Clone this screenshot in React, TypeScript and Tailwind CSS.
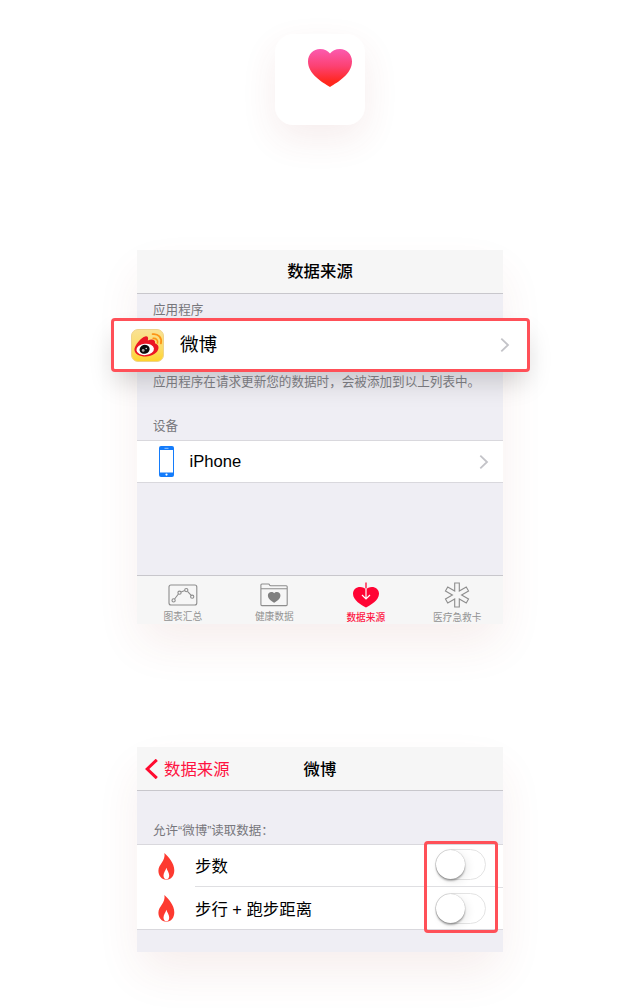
import type { ReactNode } from "react";

const heartPath =
  "M22 38 C14 33 0 25 0 12.5 C0 5 5.5 0 12 0 C16.5 0 20 2 22 4.5 C24 2 27.5 0 32 0 C38.5 0 44 5 44 12.5 C44 25 30 33 22 38 Z";

function HealthIcon() {
  return (
    <div className="h-[91px] w-[90px] rounded-[18px] bg-white pl-[33px] pt-[15px] shadow-[0_14px_36px_rgba(150,60,50,0.09)]">
      <svg className="block" width="44" height="38" viewBox="0 0 44 38">
        <defs>
          <linearGradient id="heart" x1="0" y1="0" x2="0" y2="1">
            <stop offset="0" stopColor="#fb5bb0" />
            <stop offset="0.45" stopColor="#fc4173" />
            <stop offset="0.85" stopColor="#ff2820" />
            <stop offset="1" stopColor="#ff281c" />
          </linearGradient>
        </defs>
        <path d={heartPath} fill="url(#heart)" />
      </svg>
    </div>
  );
}

function WeiboIcon() {
  return (
    <svg className="block shrink-0" width="33" height="33" viewBox="0 0 33 33">
      <defs>
        <linearGradient id="gold" x1="0" y1="0" x2="0" y2="1">
          <stop offset="0" stopColor="#f9e295" />
          <stop offset="0.6" stopColor="#fcdc66" />
          <stop offset="1" stopColor="#ffd32b" />
        </linearGradient>
      </defs>
      <rect x="0.5" y="0.5" width="32" height="32" rx="6.5" fill="url(#gold)" stroke="#efd38a" />
      <path
        d="M3.4 20.6 C3.4 16.2 10.4 8.2 14.3 7.4 C16.9 6.9 17.7 8.9 16.8 11.4 C20.2 9.8 24.8 9.9 24 14.3 C26.2 15.1 27.7 16.6 27.5 19.1 C27 24 21 27.6 14.7 27.6 C8.6 27.6 3.4 25.2 3.4 20.6 Z"
        fill="#eb1624"
      />
      <ellipse cx="14.2" cy="20.4" rx="8.8" ry="5.7" fill="#fff" transform="rotate(-6 14.2 20.4)" />
      <ellipse cx="13.6" cy="20.3" rx="5.1" ry="4.5" fill="#0b0b0b" transform="rotate(-18 13.6 20.3)" />
      <circle cx="12.2" cy="21.4" r="1.4" fill="#aaa" />
      <circle cx="15.2" cy="19.5" r="0.7" fill="#fff" />
      <path d="M22.2 9.4 C25 9 27.2 11.4 26.5 14" fill="none" stroke="#fc9415" strokeWidth="1.6" strokeLinecap="round" />
      <path d="M21.6 5.2 C27.2 4.4 31.3 9 29.9 14.4" fill="none" stroke="#fc9415" strokeWidth="1.8" strokeLinecap="round" />
    </svg>
  );
}

function Chevron() {
  return (
    <svg className="block" width="10" height="16" viewBox="0 0 10 16" fill="none" stroke="#c3c3c8" strokeWidth="1.8">
      <path d="M1.3 1.7 L8 8 L1.3 14.3" />
    </svg>
  );
}

function PhoneIcon() {
  return (
    <svg className="block" width="15" height="31" viewBox="0 0 15 31">
      <rect width="15" height="31" rx="2" fill="#147cfb" />
      <rect x="1" y="4" width="13" height="22.5" fill="#fff" />
      <path d="M5.5 2.3 H9.5" stroke="#a9d0ff" strokeWidth="0.9" />
      <circle cx="7.5" cy="28.6" r="1.1" fill="#fff" />
    </svg>
  );
}

function ChartIcon() {
  return (
    <svg width="30" height="24" viewBox="0 0 30 24" fill="none" stroke="#8d8d8d" strokeWidth="1.1">
      <rect x="1" y="2" width="27.8" height="20" rx="2" />
      <path d="M6.6 16 L10.4 11 M13.1 8.9 L16.8 7.6 M19.5 8.3 L23.2 12.3" />
      <circle cx="5.6" cy="17.4" r="1.6" />
      <circle cx="11.5" cy="9.7" r="1.6" />
      <circle cx="18.3" cy="7.1" r="1.6" />
      <circle cx="24.2" cy="13.7" r="1.6" />
    </svg>
  );
}

function FolderIcon() {
  return (
    <svg width="28" height="24" viewBox="0 0 28 24" fill="none" stroke="#8d8d8d" strokeWidth="1.1">
      <path d="M0.9 5.8 V2 Q0.9 1 1.9 1 H8.4 Q9.3 1 9.6 2 Q9.9 2.8 10.8 2.8 H26.2 Q27.2 2.8 27.2 3.8 V21.6 Q27.2 22.6 26.2 22.6 H1.9 Q0.9 22.6 0.9 21.6 Z M0.9 5.8 H27.2" />
      <path d={heartPath} transform="translate(7.9 9) scale(0.285)" fill="#7f7f7f" stroke="none" />
    </svg>
  );
}

function SourceIcon() {
  return (
    <svg width="26" height="26" viewBox="0 0 26 26">
      <path d={heartPath} transform="translate(0 5) scale(0.591 0.54)" fill="#ff0434" />
      <path d="M13 5 V17 M9 13 L13 17 L17 13" fill="none" stroke="#fff" strokeWidth="1.2" />
      <path d="M13 0.5 V6.5" stroke="#ff0434" strokeWidth="1.3" />
    </svg>
  );
}

function MedicalIcon() {
  return (
    <svg width="26" height="26" viewBox="0 0 26 26" fill="none" stroke="#8d8d8d" strokeWidth="1.1">
      <path d="M10.7 1 H15.3 V9.02 L22.25 5.01 L24.55 8.99 L17.6 13 L24.55 17.01 L22.25 20.99 L15.3 16.98 V25 H10.7 V16.98 L3.75 20.99 L1.45 17.01 L8.4 13 L1.45 8.99 L3.75 5.01 L10.7 9.02 Z" />
    </svg>
  );
}

function FlameIcon() {
  return (
    <svg className="block" width="17" height="27" viewBox="0 0 17 27">
      <path
        d="M6.4 0 C11 4.4 16.3 10.4 16.3 17.2 C16.3 22.8 13.2 26.6 8.4 26.6 C3.6 26.6 0.4 23 0.4 17.8 C0.4 11.2 7.8 8 6.4 0 Z"
        fill="#fd3a30"
      />
      <path d="M8.4 14.8 C9.1 17.6 11.2 19.6 11.2 22.4 C11.2 24.8 10.2 26 8.4 26 C6.6 26 5.5 24.8 5.5 22.4 C5.5 19.6 7.7 17.6 8.4 14.8 Z" fill="#fff" />
    </svg>
  );
}

function Tab({ icon, label, active = false }: { icon: ReactNode; label: string; active?: boolean }) {
  return (
    <div className="flex flex-1 flex-col items-center">
      <div className="flex h-[26px] items-center justify-center">{icon}</div>
      <span className={`mt-[3px] text-[9.7px] leading-[14px] ${active ? "font-medium text-[#ff1846]" : "text-[#929292]"}`}>{label}</span>
    </div>
  );
}

function Toggle() {
  return (
    <div className="h-[31px] w-[51px] rounded-full border-[1.5px] border-[#e4e4e4] bg-white">
      <div className="h-[29px] w-[29px] rounded-full bg-white shadow-[0_2px_2px_rgba(0,0,0,0.3),0_0_1px_rgba(0,0,0,0.35),3px_3px_8px_rgba(0,0,0,0.08)]" />
    </div>
  );
}

const panelShadow = "shadow-[0_22px_44px_-4px_rgba(150,60,40,0.09)]";

export default function App() {
  return (
    <div className="flex h-[1008px] w-[640px] flex-col items-center overflow-hidden bg-white pt-[34px] font-['Liberation_Sans','Noto_Sans_CJK_SC',sans-serif] text-black">
      <HealthIcon />

      <section className={`mt-[125px] flex h-[374px] w-[366px] flex-col bg-[#efeef4] ${panelShadow}`}>
        <header className="flex h-[43.5px] shrink-0 items-center justify-center border-b border-[#c8c7cc] bg-[#f6f6f6] text-[16.4px] font-medium">
          数据来源
        </header>
        <div className="flex h-[24.5px] shrink-0 items-end pl-4 text-[12.6px] leading-[15px] text-[#77777c]">应用程序</div>
        <div className="relative -ml-[26px] -mr-[27px] flex h-[54px] shrink-0 items-center rounded-[4px] border-[3px] border-[#ff5058] bg-white pl-[17px] pr-[17px] shadow-[0_14px_26px_-4px_rgba(0,0,0,0.17)]">
          <WeiboIcon />
          <span className="ml-4 flex-1 text-[18.6px]">微博</span>
          <Chevron />
        </div>
        <p className="relative h-[43px] shrink-0 whitespace-nowrap pl-4 pt-[1px] text-[12.6px] leading-[19px] tracking-[-0.01px] text-[#77777c]">
          应用程序在请求更新您的数据时，会被添加到以上列表中。
        </p>
        <div className="h-[25px] shrink-0 pl-4 text-[12.6px] leading-[22px] text-[#77777c]">设备</div>
        <div className="flex h-[43px] shrink-0 items-center border-y border-[#d9d8dd] bg-white pl-[22px] pr-[14px]">
          <PhoneIcon />
          <span className="ml-[15.5px] flex-1 pt-[2px] text-[16.6px]">iPhone</span>
          <Chevron />
        </div>
        <nav className="mt-auto flex h-[49px] border-t border-[#c8c7cc] bg-[#f6f6f6] pt-[6px]">
          <Tab icon={<ChartIcon />} label="图表汇总" />
          <Tab icon={<FolderIcon />} label="健康数据" />
          <Tab icon={<SourceIcon />} label="数据来源" active />
          <Tab icon={<MedicalIcon />} label="医疗急救卡" />
        </nav>
      </section>

      <section className={`mt-[123px] flex h-[205px] w-[366px] shrink-0 flex-col bg-[#efeef4] ${panelShadow}`}>
        <header className="grid h-[44px] shrink-0 grid-cols-[1fr_auto_1fr] items-center border-b border-[#c8c7cc] bg-[#f6f6f6] pt-[2px] text-[16.4px]">
          <div className="flex items-center gap-[5px] pl-[8px] text-[#ff1241]">
            <svg width="14" height="20" viewBox="0 0 14 20" fill="none" stroke="#ff0a2f" strokeWidth="3">
              <path d="M11.8 0.8 L2.2 10 L11.8 19.2" />
            </svg>
            数据来源
          </div>
          <span className="font-medium">微博</span>
        </header>
        <div className="flex h-[53px] shrink-0 items-end pb-[4px] pl-4 text-[12.5px] leading-[18px] text-[#77777c]">允许“微博”读取数据：</div>
        <div className="flex h-[86px] shrink-0 border-y border-[#d9d8dd] bg-white">
          <div className="flex flex-1 flex-col">
            {["步数", "步行 + 跑步距离"].map((label, index) => (
              <div key={label} className="flex h-[43px] items-center pl-[21px]">
                <FlameIcon />
                <div
                  className={`ml-[20px] flex h-full flex-1 items-center pt-[2px] text-[16.4px] ${index === 0 ? "border-b border-[#dfdfe2]" : ""}`}
                >
                  {label}
                </div>
              </div>
            ))}
          </div>
          <div className="relative -mt-[4px] mr-[5px] flex h-[92px] w-[74px] shrink-0 flex-col rounded-[4px] border-[3px] border-[#ff5058] px-[8px] pt-[5px]">
            <Toggle />
            <div className="-mx-[8px] mb-[6px] mt-[6px] h-px shrink-0 bg-[#dfdfe2]" />
            <Toggle />
          </div>
          <div className="-ml-[5px] mt-[42px] h-px w-[5px] bg-[#dfdfe2]" />
        </div>
      </section>
    </div>
  );
}
